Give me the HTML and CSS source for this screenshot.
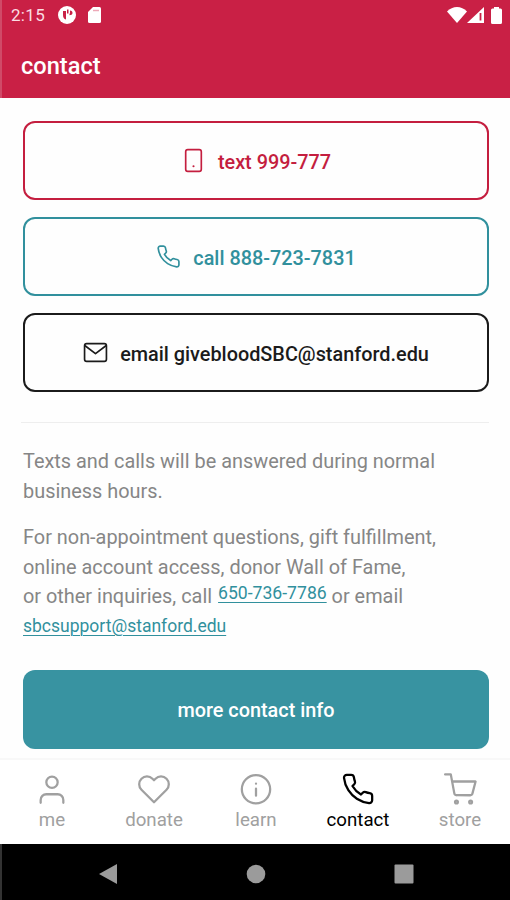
FILE: index.html
```html
<!DOCTYPE html>
<html lang="en">
<head>
  <meta charset="UTF-8" />
  <meta name="viewport" content="width=device-width, initial-scale=1.0" />
  <title>contact</title>
  <link rel="stylesheet" href="styles.css">
</head>
<body>
  <div class="app">
    <header class="header">
      <div class="status-bar">
        <span class="time">2:15</span>
        <svg class="status-app" viewBox="0 0 18 18"><circle cx="9" cy="9" r="9" fill="#fff"/><path d="M5 5h3v8.500C6 13 5 11.500 5 9zM9 3.500h1.500v4H9zM12 4.500a2.500 2.500 0 0 1 2.500 2.500c0 1.500-1.500 2.200-3 2.200V7.500H12z" fill="#c92045"/></svg>
        <svg class="status-card" viewBox="0 0 13 16"><path d="M5 0h6.500A1.500 1.500 0 0 1 13 1.500v13a1.500 1.500 0 0 1-1.500 1.500h-10A1.500 1.500 0 0 1 0 14.500V5z" fill="#fff"/><path d="M5 3.500h6" stroke="#eda9b8" stroke-width="1.500"/></svg>
        <span class="spacer"></span>
        <svg class="status-wifi" viewBox="0 0 20 16"><path d="M0 4.500C5.500-1.500 14.500-1.500 20 4.500L10 16z" fill="#fff"/></svg>
        <svg class="status-signal" viewBox="0 0 17 16"><path d="M17 0v16H0z" fill="#fff"/><path d="M13.500 6v7.500" stroke="#c92045" stroke-width="1.800"/></svg>
        <svg class="status-battery" viewBox="0 0 11 17"><path d="M3 0h5v1.500h1.500A1.500 1.500 0 0 1 11 3v12.500A1.500 1.500 0 0 1 9.500 17h-8A1.500 1.500 0 0 1 0 15.500V3A1.500 1.500 0 0 1 1.500 1.500H3z" fill="#fff"/></svg>
      </div>
      <h1>contact</h1>
    </header>

    <main class="content">
      <a class="btn btn-text" href="#">
        <svg class="icon" viewBox="0 0 24 24"><rect x="4.500" y="1.500" width="15" height="21" rx="2"/><path d="M12 17.500h.01" stroke-width="2"/></svg>
        <span>text 999-777</span>
      </a>
      <a class="btn btn-call" href="#">
        <svg class="icon" viewBox="0 0 24 24"><path d="M22 16.920v3a2 2 0 0 1-2.180 2 19.790 19.790 0 0 1-8.630-3.070 19.500 19.500 0 0 1-6-6 19.790 19.790 0 0 1-3.070-8.670A2 2 0 0 1 4.110 2h3a2 2 0 0 1 2 1.720 12.840 12.840 0 0 0 .7 2.810 2 2 0 0 1-.45 2.110L8.090 9.910a16 16 0 0 0 6 6l1.270-1.270a2 2 0 0 1 2.110-.45 12.840 12.840 0 0 0 2.810.7A2 2 0 0 1 22 16.920z"/></svg>
        <span>call 888-723-7831</span>
      </a>
      <a class="btn btn-email" href="#">
        <svg class="icon" viewBox="0 0 24 24"><rect x="1.500" y="3.500" width="21" height="17" rx="2"/><path d="M22 5.500l-10 7.500L2 5.500"/></svg>
        <span>email givebloodSBC@stanford.edu</span>
      </a>

      <hr>

      <p>Texts and calls will be answered during normal<br>business hours.</p>
      <p>For non-appointment questions, gift fulfillment,<br>online account access, donor Wall of Fame,<br>or other inquiries, call <a class="link link-phone" href="#">650-736-7786</a> or email<br><a class="link link-mail" href="#">sbcsupport@stanford.edu</a></p>

      <a class="btn btn-more" href="#"><span>more contact info</span></a>
    </main>

    <nav class="tabs">
      <a class="tab" href="#">
        <svg class="icon" viewBox="0 0 24 24"><path d="M20 21v-2a4 4 0 0 0-4-4H8a4 4 0 0 0-4 4v2"/><circle cx="12" cy="6.500" r="4"/></svg>
        <span>me</span>
      </a>
      <a class="tab" href="#">
        <svg class="icon" viewBox="0 0 24 24"><path d="M20.840 4.010a5.500 5.500 0 0 0-7.780 0L12 5.070l-1.060-1.060a5.500 5.500 0 0 0-7.780 7.780l1.060 1.060L12 20.630l7.780-7.780 1.060-1.060a5.500 5.500 0 0 0 0-7.780z"/></svg>
        <span>donate</span>
      </a>
      <a class="tab" href="#">
        <svg class="icon" viewBox="0 0 24 24"><circle cx="12" cy="11.500" r="10"/><path d="M12 16v-5M12 7.500h.01"/></svg>
        <span>learn</span>
      </a>
      <a class="tab active" href="#">
        <svg class="icon" viewBox="0 0 24 24"><path transform="translate(0 -.7)" d="M22 16.920v3a2 2 0 0 1-2.180 2 19.790 19.790 0 0 1-8.630-3.070 19.500 19.500 0 0 1-6-6 19.790 19.790 0 0 1-3.070-8.670A2 2 0 0 1 4.110 2h3a2 2 0 0 1 2 1.720 12.840 12.840 0 0 0 .7 2.810 2 2 0 0 1-.45 2.110L8.090 9.910a16 16 0 0 0 6 6l1.270-1.270a2 2 0 0 1 2.110-.45 12.840 12.840 0 0 0 2.810.7A2 2 0 0 1 22 16.920z"/></svg>
        <span>contact</span>
      </a>
      <a class="tab" href="#">
        <svg class="icon" viewBox="0 0 24 24"><circle cx="9.500" cy="20.500" r="1"/><circle cx="19.500" cy="20.500" r="1"/><path d="M1.500 1h4l2.500 13.400a1.600 1.600 0 0 0 1.600 1.300h9.600a1.600 1.600 0 0 0 1.600-1.300L23 6H6.400"/></svg>
        <span>store</span>
      </a>
    </nav>

    <div class="system-nav">
      <svg viewBox="0 0 20 22"><path d="M19 1v20L1 11z"/></svg>
      <svg viewBox="0 0 20 22"><circle cx="10" cy="11" r="9.300"/></svg>
      <svg viewBox="0 0 20 22"><rect x=".5" y="1.500" width="19" height="19" rx="1"/></svg>
    </div>
  </div>
</body>
</html>
```
FILE: styles.css
```css
body, html {
  height: 100%;
  margin: 0;
  font-family: Roboto, "Liberation Sans", sans-serif;
}
a {
  text-decoration: none;
}
.app {
  display: flex;
  flex-direction: column;
  height: 900px;
  box-sizing: border-box;
  overflow: hidden;
  background-color: #fefefe;
}
.header {
  height: 98px;
  flex-shrink: 0;
  background-color: #c92045;
  color: #fff;
  box-shadow: inset 2px 0 0 #d04a68;
}
.status-bar {
  display: flex;
  align-items: center;
  height: 30px;
  padding: 0 8px 0 11px;
}
.time {
  width: 47px;
  font-size: 17px;
  letter-spacing: 0.3px;
  line-height: 20px;
  color: #fbdde3;
}
.spacer {
  flex: 1;
}
.status-app {
  width: 18px;
  height: 18px;
  margin-right: 12px;
}
.status-card {
  width: 13px;
  height: 16px;
}
.status-wifi {
  width: 20px;
  height: 16px;
}
.status-signal {
  width: 17px;
  height: 16px;
  margin: 0 7px 0 0;
}
.status-battery {
  width: 11px;
  height: 17px;
}
.header h1 {
  margin: 21px 0 0 21px;
  font-size: 23.6px;
  line-height: 30px;
  font-weight: 500;
}
.content {
  height: 660px;
  flex-shrink: 0;
  box-sizing: border-box;
  padding: 23px 21px 0 23px;
}
.btn {
  display: flex;
  justify-content: center;
  align-items: center;
  gap: 12px;
  height: 79px;
  box-sizing: border-box;
  margin-bottom: 17px;
  border: 2px solid;
  border-radius: 12px;
  font-size: 19.85px;
  font-weight: 500;
}
.btn span {
  line-height: 24px;
  padding-top: 4px;
}
.icon {
  fill: none;
  stroke: currentColor;
  stroke-width: 1.6;
  stroke-linecap: round;
  stroke-linejoin: round;
}
.btn .icon {
  width: 25px;
  height: 25px;
}
.btn-text {
  color: #c41e3f;
}
.btn-call {
  color: #31909d;
}
.btn-email {
  color: #1b1b1b;
}
hr {
  height: 1px;
  margin: 30px 0 24px -2px;
  border: none;
  background-color: #eee;
}
.content p {
  margin: 0 0 17px;
  font-size: 19.9px;
  line-height: 29.5px;
  color: #868686;
  white-space: nowrap;
}
.link {
  color: #31909d;
  line-height: 20px;
  text-decoration: underline;
  text-decoration-thickness: 1px;
  text-underline-offset: 3px;
}
.link-phone {
  position: relative;
  top: -4px;
  margin: 0 0 0 1px;
  font-size: 17.6px;
}
.link-mail {
  position: relative;
  top: -1px;
  font-size: 17.5px;
}
.content .btn-more {
  margin: 28.600px 0 0;
  border: none;
  background-color: #3893a1;
  color: #fff;
}
.tabs {
  display: flex;
  height: 86px;
  flex-shrink: 0;
  box-sizing: border-box;
  padding: 13px 0 0 1px;
  border-top: 2px solid #f8f8f8;
  background-color: #fff;
}
.tab {
  flex: 0 0 102px;
  display: flex;
  flex-direction: column;
  align-items: center;
  color: #a0a0a0;
  font-size: 18.7px;
  line-height: 26px;
}
.tab .icon {
  width: 34px;
  height: 34px;
}
.tab.active {
  color: #000;
}
.system-nav {
  display: flex;
  justify-content: center;
  align-items: center;
  gap: 128px;
  flex: 1;
  padding: 3px 0 0 1px;
  background-color: #000;
  box-shadow: inset 2px 0 0 #333;
}
.system-nav svg {
  width: 20px;
  height: 22px;
  fill: #9b9b9b;
}
```
